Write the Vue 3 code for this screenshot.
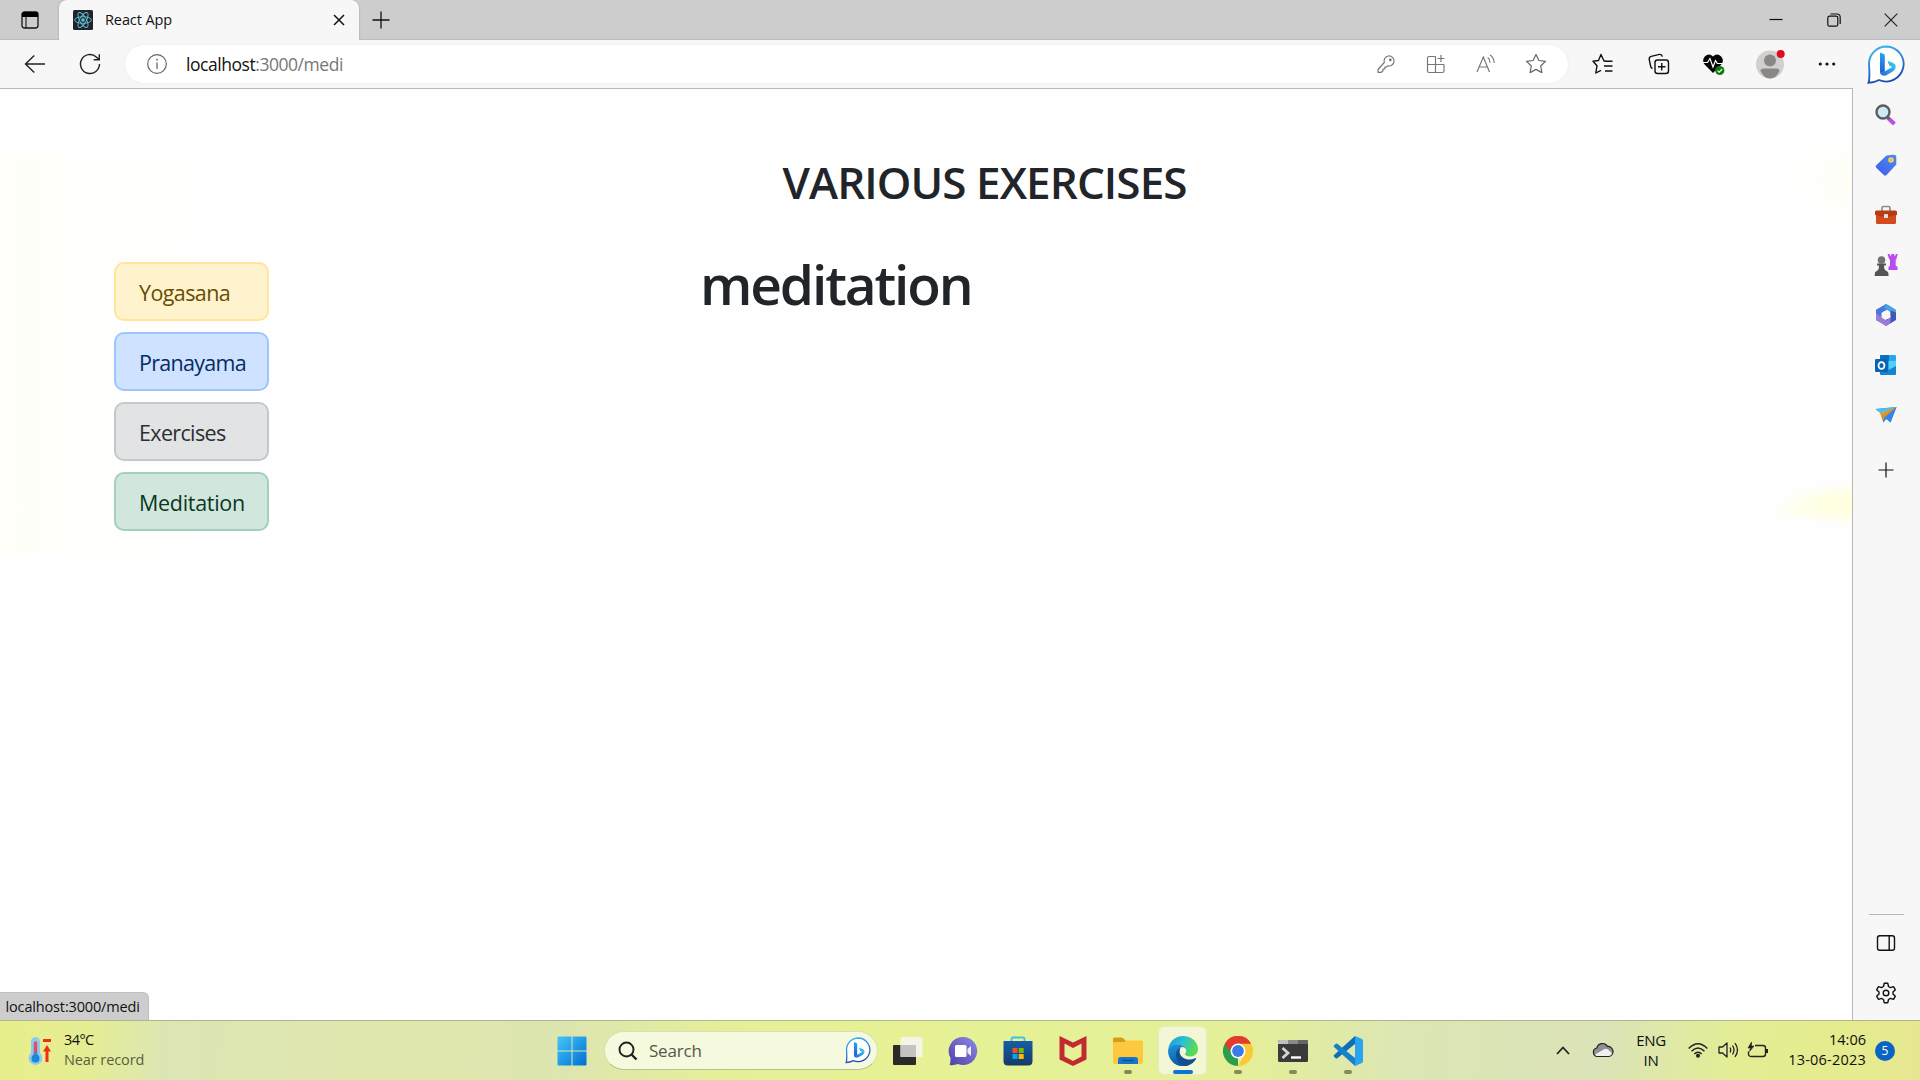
<script setup>
const links = [
  { label: 'Yogasana', tone: 'warning' },
  { label: 'Pranayama', tone: 'primary' },
  { label: 'Exercises', tone: 'secondary' },
  { label: 'Meditation', tone: 'success' },
]
</script>

<template>
  <div class="screen">
    <svg class="defs" width="0" height="0">
      <defs>
        <linearGradient id="bingRing" x1="0" y1="0" x2="0.3" y2="1">
          <stop offset="0" stop-color="#35c1ee" /><stop offset="0.5" stop-color="#2f83dd" /><stop offset="1" stop-color="#1d4cb0" />
        </linearGradient>
        <linearGradient id="bingStem" x1="0" y1="0" x2="0" y2="1">
          <stop offset="0" stop-color="#2aa5ee" /><stop offset="1" stop-color="#2354d8" />
        </linearGradient>
        <linearGradient id="bingTail" x1="0" y1="1" x2="1" y2="0">
          <stop offset="0" stop-color="#2466e4" /><stop offset="1" stop-color="#3bd6ee" />
        </linearGradient>
        <symbol id="bing" viewBox="0 0 38 40">
          <path d="M19.500 1.500a17.500 17.500 0 1 1-7.500 33.500Q7 37.800 1.500 37.800Q3 34 2 19A17.500 17.500 0 0 1 19.500 1.500z" fill="#fff" stroke="url(#bingRing)" stroke-width="1.900" />
          <path d="M13 7.500l3.800 1.500q1 .5 1 1.600V27l-2.300 3.300Q13 29.500 13 26.500z" fill="url(#bingStem)" />
          <path d="M13.200 27.500q1.200 3.200 4 3.200 1.500 0 3-.9l6-3.600q2.500-1.600 2.500-4.200c0-2.500-1.500-3.700-3.500-4.500l-3.600-1.300q-1.200-.2-.8.9l1.500 3.500 3 1.400-7.800 4.600z" fill="url(#bingTail)" />
        </symbol>
      </defs>
    </svg>

    <header class="titlebar">
      <div class="workspaces">
        <svg width="20" height="20" viewBox="0 0 20 20"><rect x="2" y="2" width="16" height="16" rx="2.500" fill="none" stroke="#111" stroke-width="1.300" /><path d="M2 7V4a2 2 0 0 1 2-2h12a2 2 0 0 1 2 2v3z" fill="#000" /><path d="M6 7v11" stroke="#222" stroke-width="1.200" /></svg>
      </div>
      <div class="tab">
        <svg class="favicon" width="20" height="20" viewBox="0 0 20 20"><rect width="20" height="20" rx="1.500" fill="#20232a" /><g fill="none" stroke="#61c5dd" stroke-width=".9"><ellipse cx="10" cy="10" rx="8.400" ry="3.300" /><ellipse cx="10" cy="10" rx="8.400" ry="3.300" transform="rotate(60 10 10)" /><ellipse cx="10" cy="10" rx="8.400" ry="3.300" transform="rotate(120 10 10)" /></g><circle cx="10" cy="10" r="1.800" fill="#61c5dd" /></svg>
        <span class="tab-title">React App</span>
        <svg width="12" height="12" viewBox="0 0 12 12"><path d="M1 1l10 10M11 1L1 11" stroke="#111" stroke-width="1.500" /></svg>
      </div>
      <div class="newtab">
        <svg width="18" height="18" viewBox="0 0 18 18"><path d="M9 .5v17M.5 9h17" stroke="#111" stroke-width="1.300" /></svg>
      </div>
      <div class="window-buttons">
        <span><svg width="14" height="14" viewBox="0 0 14 14"><path d="M.5 6.500h13" stroke="#111" stroke-width="1.200" /></svg></span>
        <span><svg width="14" height="14" viewBox="0 0 14 14"><rect x=".8" y="3.200" width="10" height="10" rx="1.800" fill="none" stroke="#111" stroke-width="1.200" /><path d="M3.500 1h6.500q3.200 0 3.200 3.200V11" fill="none" stroke="#111" stroke-width="1.200" /></svg></span>
        <span><svg width="14" height="14" viewBox="0 0 14 14"><path d="M.7.7l12.600 12.600M13.300.7L.7 13.300" stroke="#222" stroke-width="1.200" /></svg></span>
      </div>
    </header>

    <div class="browser">
      <div class="main">
        <div class="toolbar">
          <span class="tool nav"><svg width="22" height="20" viewBox="0 0 22 20"><path d="M21 10H1.500M10.300 1.500L1.500 10l8.800 8.500" fill="none" stroke="#222" stroke-width="1.400" /></svg></span>
          <span class="tool nav"><svg width="22" height="22" viewBox="0 0 22 22"><path d="M20.500 11a9.500 9.500 0 1 1-3.200-7.100L20 6.400M20.300 1.200v5.600h-5.600" fill="none" stroke="#222" stroke-width="1.400" /></svg></span>
          <div class="address">
            <svg class="info" width="22" height="22" viewBox="0 0 22 22"><circle cx="11" cy="11" r="9.300" fill="none" stroke="#666" stroke-width="1.200" /><path d="M11 9.500V16" stroke="#666" stroke-width="1.300" /><circle cx="11" cy="6.700" r=".9" fill="#666" /></svg>
            <span class="url">localhost<i>:3000/medi</i></span>
            <div class="address-tools">
              <span><svg width="20" height="20" viewBox="0 0 20 20" fill="none" stroke="#777" stroke-width="1.200"><path d="M8.300 8.500a5 5 0 1 1 3.500 3.300L10.500 13H8.800v2H7v1.700L5.300 18.300H2V15.500z" stroke-linejoin="round" /><circle cx="14.300" cy="5.900" r=".8" fill="#777" /></svg></span>
              <span><svg width="20" height="20" viewBox="0 0 20 20" fill="none" stroke="#777" stroke-width="1.200"><path d="M9.500 2.500H3a1.500 1.500 0 0 0-1.500 1.500v13A1.500 1.500 0 0 0 3 18.500h13.500A1.500 1.500 0 0 0 18 17v-6.500M1.500 10.500H18M9.500 2.500v16M15 1v7M11.500 4.500h7" /></svg></span>
              <span><svg width="20" height="20" viewBox="0 0 20 20" fill="none" stroke="#777" stroke-width="1.200"><path d="M1 18L7.300 3 13.500 18M3.200 13h8.100M11.700 3.500q2.300 1.600 2.300 5M14 1q4 2.500 4.200 8" /></svg></span>
              <span><svg width="22" height="22" viewBox="0 0 22 22" fill="none" stroke="#666" stroke-width="1.200" stroke-linejoin="round"><path d="M11 1.500l2.900 6 6.600.9-4.800 4.600 1.200 6.600-5.900-3.200-5.900 3.200L6.300 13 1.500 8.400l6.600-.9z" /></svg></span>
            </div>
          </div>
          <span class="tool wide first"><svg width="22" height="22" viewBox="0 0 22 22" fill="none" stroke="#111" stroke-width="1.400" stroke-linejoin="round"><path d="M13.500 8H12L9 1.500 6.500 7.500 1 8.300l4 4.500L3.800 20 9 17.300M13 8.200h7.500M12 13h8.500M13 18h7.500" /></svg></span>
          <span class="tool wide"><svg width="22" height="22" viewBox="0 0 22 22" fill="none" stroke="#111" stroke-width="1.400"><rect x="7" y="7" width="13.500" height="13.500" rx="2.500" /><path d="M4.500 15.500Q3 15 2.700 13.500L1.200 6.300Q1 4 3.200 3.400l8.300-2q2.300-.3 2.900 2.200M13.750 10v7.500M10 13.750h7.500" /></svg></span>
          <span class="tool wide"><svg width="24" height="24" viewBox="0 0 24 24"><path d="M11 21L2.800 12.700a6 6 0 0 1 0-8.300q4.200-4 8.200 0 4-4 8.200 0a6 6 0 0 1 0 8.300z" fill="#050505" /><path d="M1 10.500h4.500L8 6.500l3 8.500 2.500-6.500 1.800 3H21" fill="none" stroke="#fff" stroke-width="1.200" /><circle cx="17.800" cy="18.500" r="4.600" fill="#107c10" /><path d="M15.600 18.600l1.600 1.600 2.900-3" fill="none" stroke="#fff" stroke-width="1.200" /></svg></span>
          <span class="tool wide"><svg width="32" height="32" viewBox="0 0 32 32"><circle cx="16" cy="16.500" r="14" fill="#d2d0ce" /><circle cx="16" cy="12.500" r="6" fill="#8a8886" /><path d="M6.500 23q0-2.500 3-2.500h13q3 0 3 2.500-3.500 7.500-9.500 7.500T6.500 23z" fill="#8a8886" /><circle cx="26.700" cy="6" r="4" fill="#e00b1c" /></svg></span>
          <span class="tool wide more"><svg width="18" height="6" viewBox="0 0 18 6" fill="#111"><circle cx="2.300" cy="3" r="1.600" /><circle cx="9" cy="3" r="1.600" /><circle cx="15.700" cy="3" r="1.600" /></svg></span>
        </div>

        <main class="page">
          <h1 class="title">VARIOUS EXERCISES</h1>
          <div class="columns">
            <nav class="links">
              <a v-for="link in links" :key="link.label" :class="['link', link.tone]">{{ link.label }}</a>
            </nav>
            <h2 class="subtitle">meditation</h2>
          </div>
          <div class="status">localhost:3000/medi</div>
        </main>
      </div>

      <aside class="sidebar">
        <div class="bing-cell"><svg width="38" height="40"><use href="#bing" /></svg></div>
        <div class="cell"><svg width="22" height="22" viewBox="0 0 22 22"><path d="M13 14l6.500 6" stroke="#c04be8" stroke-width="4" /><path d="M12 12.500l2.500 2.500" stroke="#666" stroke-width="2.500" /><circle cx="8" cy="8" r="6.500" fill="#cfe8f6" stroke="#5d5d5d" stroke-width="2.400" /></svg></div>
        <div class="cell"><svg width="22" height="22" viewBox="0 0 22 22"><defs><linearGradient id="tag" x1="0" y1="1" x2="1" y2="0"><stop stop-color="#3d5cf0" /><stop offset="1" stop-color="#4e8bea" /></linearGradient></defs><path d="M11.500 1.500L18.500.7Q21.300.5 21.300 3v7.500L11.500 21q-1.500 1-2.700 0L1.500 14q-1.600-1.600 0-3z" fill="url(#tag)" /><circle cx="16" cy="6" r="2" fill="#c9bb85" stroke="#ffd45b" stroke-width="1.600" /></svg></div>
        <div class="cell"><svg width="24" height="20" viewBox="0 0 24 20"><path d="M8 6V3q0-1.500 1.500-1.500h5Q16 1.500 16 3v3" fill="none" stroke="#8c8c8c" stroke-width="1.700" /><rect x="2" y="9" width="20" height="10" rx="1.500" fill="#d34a1b" /><path d="M1 7q0-1.500 1.500-1.500h19Q23 5.500 23 7v3l-7 1.500H8L1 10z" fill="#b83a10" /><rect x="10" y="9" width="4" height="4" rx=".6" fill="#ddd" /></svg></div>
        <div class="cell"><svg width="24" height="24" viewBox="0 0 24 24"><path d="M13.500 1h2.200v1.500h1.600V1h2.800v1.500h1.600V1h2l-1.400 5.500h-.6v6l1.800 1.500V17h-9v-3l1.500-1.500v-6h-.8z" fill="#b94df2" /><circle cx="7.500" cy="7" r="3.800" fill="#727272" /><path d="M3 10.500h9v2H10q0 4.500 2.500 5.500 2 .7 2 3v2H.7v-2q0-2.300 2-3Q5 17 5 12.500H3z" fill="#555" /></svg></div>
        <div class="cell"><svg width="22" height="24" viewBox="0 0 22 24"><path d="M11 1L1 6.800v7l5.500 3V10L15 5V3.300z" fill="#4a77d9" /><path d="M11 1l4.500 2.300L21 6.800v7L15.500 12V9L9 5z" fill="#46a5e0" /><path d="M11 23l10-6V9.500l-5.500-2v7L6.500 19z" fill="#3d57bd" /><path d="M1 10v7.200L11 23l4-2.500 1-6-4.500 3L7 14.800z" fill="#9a7bd6" /><circle cx="11" cy="12" r="4" fill="#f6f6f6" /></svg></div>
        <div class="cell"><svg width="22" height="22" viewBox="0 0 22 22"><rect x="5" y="1" width="16" height="19" rx="1.300" fill="#28a8ea" /><path d="M5 2q0-1 1-1h8v6H5z" fill="#0d70bd" /><path d="M14 7h7v5l-7 4z" fill="#50d0f8" /><path d="M5 11l9 5 7-4v8q0 1-1 1H6q-1 0-1-1z" fill="#1685d1" /><rect x="0" y="5" width="13" height="13" rx="1.300" fill="#0864b5" /><ellipse cx="6.500" cy="11.500" rx="3" ry="3.400" fill="none" stroke="#fff" stroke-width="1.800" /></svg></div>
        <div class="cell"><svg width="22" height="18" viewBox="0 0 22 18"><path d="M.5 3L21.500 1 15.500 16.500 11.500 13 8 16.800V9z" fill="#368ce3" /><path d="M.5 3l21-2L8 9z" fill="#4fbce9" /><path d="M4.500 7.500L21.500 1 8 12z" fill="#e6a32d" /><path d="M6 9L21.500 1 9.500 11.500 7.500 15z" fill="#d8922a" /><path d="M21.500 1L15.500 16.500 10 11.500z" fill="#3684ea" /></svg></div>
        <div class="cell plus"><svg width="16" height="16" viewBox="0 0 16 16"><path d="M8 .5v15M.5 8h15" stroke="#111" stroke-width="1.200" /></svg></div>
        <div class="sidebar-bottom">
          <hr />
          <div class="cell"><svg width="20" height="18" viewBox="0 0 20 18" fill="none" stroke="#111"><rect x="1.500" y="1.800" width="17" height="14.400" rx="2.200" stroke-width="1.400" /><path d="M13.200 2v14" stroke-width="1.400" /></svg></div>
          <div class="cell"><svg width="24" height="24" viewBox="0 0 24 24" fill="none" stroke="#111" stroke-width="1.400" stroke-linejoin="round"><path d="M10.200 2.300h3.600l.7 3.200 1.900 1.100 3.100-1 1.900 3.200-2.400 2.200v2l2.400 2.200-1.900 3.200-3.100-1-1.900 1.100-.7 3.200h-3.600l-.7-3.200-1.900-1.100-3.100 1-1.900-3.200L5 13v-2L2.600 8.800l1.900-3.200 3.100 1 1.900-1.100z" /><circle cx="12" cy="12" r="2.800" /></svg></div>
        </div>
      </aside>
    </div>

    <footer class="taskbar">
      <div class="weather">
        <svg width="24" height="30" viewBox="0 0 24 30"><path d="M3 5.500a4.500 4.500 0 0 1 9 0V17a6.800 6.800 0 1 1-9 0z" fill="#8fc9ee" /><path d="M7.500 7v15" stroke="#d9506c" stroke-width="3.500" stroke-linecap="round" /><path d="M7.500 16v5" stroke="#5f7bc7" stroke-width="3.500" /><circle cx="7.500" cy="22.500" r="4" fill="#1688d8" /><path d="M15 4.500h8" stroke="#f22f14" stroke-width="3" /><path d="M19 26V13" stroke="#f22f14" stroke-width="3" /><path d="M15 15.500L19 9l4 6.500z" fill="#f22f14" /></svg>
        <div class="weather-text"><span class="temp">34°C</span><span class="note">Near record</span></div>
      </div>

      <div class="apps">
        <span class="start"><svg width="30" height="30" viewBox="0 0 30 30"><defs><linearGradient id="win" x1="0" y1="0" x2="1" y2="1"><stop stop-color="#43c7f8" /><stop offset="1" stop-color="#0070d3" /></linearGradient></defs><path d="M1.500.500h13v14h-14v-13q0-1 1-1zM15.500.500h13q1 0 1 1v13h-14zM.5 15.500h14v14h-13q-1 0-1-1zM15.500 15.500h14v13q0 1-1 1h-13z" fill="url(#win)" /></svg></span>
        <div class="search">
          <svg class="lens" width="20" height="20" viewBox="0 0 20 20" fill="none" stroke="#222" stroke-width="1.900"><circle cx="8.500" cy="8.500" r="7" /><path d="M13.500 13.500l5 5" stroke-width="2.400" /></svg>
          <span class="search-label">Search</span>
          <svg width="26" height="27"><use href="#bing" /></svg>
        </div>
        <span class="app"><svg width="30" height="30" viewBox="0 0 30 30"><rect x="0" y="9" width="23" height="20" rx="1" fill="#2c2a29" /><rect x="7.500" y="1" width="22" height="20" rx="1" fill="#f6f6f2" fill-opacity=".85" /><rect x="7.500" y="9" width="15.500" height="12" fill="#c5c4c1" /></svg></span>
        <span class="app"><svg width="30" height="30" viewBox="0 0 30 30"><defs><linearGradient id="chat" x1="1" y1="0" x2="0" y2="1"><stop stop-color="#8e8be5" /><stop offset="1" stop-color="#4e40a8" /></linearGradient></defs><path d="M15 1a14 14 0 1 1-5 27q-4 1.500-8.300 1Q2.500 26 2.600 22A14 14 0 0 1 15 1z" fill="url(#chat)" /><rect x="7" y="9" width="11.500" height="12" rx="1.500" fill="#fff" /><path d="M19.500 13l3.500-3v10l-3.500-3z" fill="#eee" /></svg></span>
        <span class="app"><svg width="30" height="30" viewBox="0 0 30 30"><defs><linearGradient id="store" x1="0" y1="0" x2="0" y2="1"><stop stop-color="#155fa6" /><stop offset="1" stop-color="#173a67" /></linearGradient></defs><path d="M8.500 6V3q0-1.500 1.500-1.500h10q1.500 0 1.500 1.500v3" fill="none" stroke="#38c1ef" stroke-width="1.800" /><path d="M.5 5h29v20q0 4.500-4.500 4.500H5Q.5 29.500.5 25z" fill="url(#store)" /><path d="M9.500 12h5v5h-5z" fill="#f25022" /><path d="M15.700 12h5v5h-5z" fill="#7fba00" /><path d="M9.500 18h5v5h-5z" fill="#00a4ef" /><path d="M15.700 18h5v5h-5z" fill="#ffb900" /></svg></span>
        <span class="app"><svg width="28" height="32" viewBox="0 0 28 32"><path d="M.5 1L14 7.500 27.500 1v23.500L14 31 .5 24.500zM5.500 8.500v13L14 26l8.500-4.500v-13L14 13z" fill="#c12a30" fill-rule="evenodd" /></svg></span>
        <span class="app running"><svg width="30" height="28" viewBox="0 0 30 28"><path d="M0 2q0-1.500 1.500-1.500h7q1 0 1.700.7L12.500 3.500V8H0z" fill="#d99b12" /><path d="M0 6q0-1 1-1h10l2-1.500h15.500Q30 3.500 30 5v20.500q0 1.500-1.500 1.500h-27Q0 27 0 25.500z" fill="#fdc83d" /><path d="M5 27v-4.500Q5 20 7.500 20h15q2.500 0 2.500 2.500V27z" fill="#1a76c9" /><path d="M9.500 23.500h11" stroke="#0c4f91" stroke-width="1.500" /></svg></span>
        <span class="app running active"><svg width="30" height="30" viewBox="0 0 30 30"><defs><linearGradient id="edgeTop" x1="0" y1="0" x2="1" y2=".4"><stop stop-color="#1695d8" /><stop offset=".5" stop-color="#2bbfd4" /><stop offset="1" stop-color="#58db55" /></linearGradient><linearGradient id="edgeBody" x1="0" y1="0" x2=".4" y2="1"><stop stop-color="#1c98de" /><stop offset="1" stop-color="#0c59a4" /></linearGradient></defs><path d="M.2 13.500C1.200 5.500 7.300 0 15 0c8.200 0 15 5.800 15 13 0 4.700-3.600 7.500-7.700 7.500-3.500 0-5.300-1.200-5.300-2.200 0-.8 1.200-1.300 1.200-3.600 0-3.100-3-6-7.500-6C5.500 8.700 1.500 10.800.2 13.500z" fill="url(#edgeTop)" /><path d="M.2 13.500C1.500 10.500 5 8.500 9.500 8.500c5 0 8.700 2.700 8.700 6.200 0-2.200-2-3.800-4-3.800-2.500 0-4.700 3-4.700 6.300 0 6 4.600 10.800 11 12.100A15 15 0 0 1 .2 13.500z" fill="url(#edgeBody)" /><path d="M13 11.200c-3 1.200-5 3.800-5 7.600 0 5.700 4.500 11 11 11 4-1 7.200-3.500 9-6.800.4-.7-.1-1.200-.9-.8C20.500 25.500 13 22.500 11.800 17c-.4-2.300 0-4.200 1.200-5.800z" fill="#124d8f" /></svg></span>
        <span class="app running"><svg width="30" height="30" viewBox="0 0 30 30"><path d="M15 15L2 7.500a15 15 0 0 1 26 0z" fill="#e33b2e" /><path d="M15 15v15A15 15 0 0 1 2 7.500z" fill="#2c9e4b" /><path d="M15 7.500h13A15 15 0 0 1 15 30l6.500-11.200z" fill="#fcc934" /><path d="M2 7.500l6.500 11.300L15 15z" fill="#2c9e4b" /><path d="M2 7.500A15 15 0 0 1 28 7.500H15A7.500 7.500 0 0 0 8 12.500L6.500 15z" fill="#e33b2e" /><circle cx="15" cy="15" r="7.500" fill="#fff" /><circle cx="15" cy="15" r="5.900" fill="#3a7bea" /></svg></span>
        <span class="app running"><svg width="30" height="24" viewBox="0 0 30 24"><rect y="1" width="30" height="22" rx="1.500" fill="#3a3a3a" /><path d="M0 5V2.500Q0 1 1.500 1h8.500v4z" fill="#c0c0bd" /><path d="M10 1h10v4H10z" fill="#8a8a88" /><path d="M20 1h8.500Q30 1 30 2.500V5H20z" fill="#656565" /><path d="M4.500 9l5.500 5-5.500 5" fill="none" stroke="#d4d4d4" stroke-width="2.800" /><path d="M13 18.500h10" stroke="#fff" stroke-width="2.400" /></svg></span>
        <span class="app running"><svg width="30" height="30" viewBox="0 0 30 30"><path d="M22 0L1 19q-.8.8 0 1.600l1.700 1.600q.8.600 1.600 0L22 8z" fill="#0d6fb8" /><path d="M22 30L1 11q-.8-.8 0-1.600l1.700-1.600q.8-.6 1.600 0L22 22z" fill="#1682cc" /><path d="M22 0l7 3q1 .5 1 1.700v20.600q0 1.200-1 1.700l-7 3z" fill="#2ba3ee" /></svg></span>
      </div>

      <div class="tray">
        <span class="tray-icon chevron"><svg width="14" height="9" viewBox="0 0 14 9"><path d="M1 8l6-6.500L13 8" fill="none" stroke="#222" stroke-width="1.800" /></svg></span>
        <span class="tray-icon cloud"><svg width="22" height="16" viewBox="0 0 22 16"><path d="M5.500 14.500a4.300 4.300 0 0 1-.7-8.500 5.800 5.800 0 0 1 10.700-1.500 5 5 0 0 1 1 10z" fill="#8f9092" stroke="#222" stroke-width="1.200" /><path d="M3 12.500L12.500 7q2-.8 3.500.5l4 3.500q-.5 3-3.500 3h-11Q3.500 14 3 12.500z" fill="#efefee" /></svg></span>
        <div class="lang"><span>ENG</span><span>IN</span></div>
        <span class="tray-icon wifi"><svg width="20" height="16" viewBox="0 0 20 16" fill="none" stroke="#222" stroke-width="1.400"><path d="M.7 6.500q9.300-9.500 18.600 0M3.500 9.300q6.500-6.600 13 0M6.300 12q3.700-3.700 7.400 0" /><circle cx="10" cy="13.800" r="1.300" fill="#222" /></svg></span>
        <span class="tray-icon volume"><svg width="21" height="18" viewBox="0 0 21 18" fill="none" stroke="#222" stroke-width="1.300" stroke-linejoin="round"><path d="M1 6h3.500L9 2v14l-4.500-4H1zM12 6.500q1.500 2.500 0 5M14.500 4.500q3 4.500 0 9M17 2.200q5 6.800 0 13.600" /></svg></span>
        <span class="tray-icon battery"><svg width="22" height="18" viewBox="0 0 22 18" fill="none" stroke="#222" stroke-width="1.400"><path d="M8 4.500h8q2.500 0 2.500 2.500v6q0 2.500-2.500 2.500H4Q1.500 15.500 1.500 13v-2.500" /><path d="M20 8v4" stroke-width="2" /><path d="M4.500 1L1 7h2.500L2.500 10.500 7 5H4.500z" fill="#222" stroke-width=".6" /></svg></span>
        <div class="clock"><span>14:06</span><span class="date">13-06-2023</span></div>
        <span class="badge">5</span>
      </div>
    </footer>
  </div>
</template>

<style>
html, body { margin: 0; background: #fff; }
</style>

<style scoped>
* { box-sizing: border-box; }
svg { display: block; flex: none; }
.screen { width: 1920px; height: 1080px; display: flex; flex-direction: column; overflow: hidden; font-family: "Open Sans", "Noto Sans", sans-serif; color: #111; white-space: nowrap; }
.defs { position: absolute; }

.titlebar { height: 40px; flex: none; display: flex; align-items: stretch; background: #cdcdcd; border-bottom: 1px solid #bcbcbc; }
.workspaces { width: 59px; display: flex; align-items: center; justify-content: center; }
.tab { width: 300px; height: 40px; display: flex; align-items: center; padding: 0 14px; background: #f7f7f7; border-radius: 8px 8px 0 0; box-shadow: 0 0 2px #999; clip-path: inset(0 -3px 0 -3px); }
.tab-title { flex: 1; margin-left: 12px; font-size: 14.500px; letter-spacing: -.1px; line-height: 20px; }
.newtab { width: 44px; display: flex; align-items: center; justify-content: center; }
.window-buttons { margin-left: auto; display: flex; }
.window-buttons span { width: 57.500px; display: flex; align-items: center; justify-content: center; }

.browser { flex: 1; display: flex; min-height: 0; background: #f7f7f7; }
.main { flex: 1; display: flex; flex-direction: column; min-width: 0; }
.toolbar { height: 48px; display: flex; align-items: center; padding-left: 8px; }
.tool { display: flex; align-items: center; justify-content: center; height: 40px; }
.nav { width: 55px; }
.wide { width: 55.500px; }
.more { padding-left: 4px; }
.first { margin-left: 8px; }
.address { width: 1443px; height: 38px; margin-left: 7px; display: flex; align-items: center; background: #fff; border-radius: 19px; padding: 0 7px 0 21px; box-shadow: 0 0 3px #e8e8e8; }
.url { margin: -1px 0 0 18px; font-size: 17.500px; line-height: 24px; letter-spacing: -.45px; }
.url i { font-style: normal; color: #777; }
.address-tools { margin-left: auto; display: flex; }
.address-tools span { width: 50px; display: flex; align-items: center; justify-content: center; }

.page { flex: 1; display: flex; flex-direction: column; border-top: 1px solid #b9b9b9; border-right: 1px solid #b9b9b9; background:
  radial-gradient(ellipse 68px 22px at 1851px 415px, #ffffd9 0%, #ffffe6 50%, rgba(255,255,240,0) 100%),
  radial-gradient(ellipse 55px 10px at 1822px 421px, #fffff0 50%, rgba(255,255,240,0) 100%),
  radial-gradient(ellipse 60px 50px at 1851px 90px, #fffff6 0%, rgba(255,255,250,0) 100%),
  linear-gradient(90deg, #fffff9 0, rgba(255,255,255,0) 210px) 0 66px / 400px 400px no-repeat, #fefefe; }
.title { margin: 62px 0 0 782.500px; font-size: 44px; line-height: 62px; font-weight: 600; letter-spacing: -.93px; color: #212529; }
.columns { display: flex; margin-top: 23px; padding-left: 114px; align-items: flex-start; }
.links { width: 155px; display: flex; flex-direction: column; gap: 11px; margin-top: 26px; }
.link { height: 59px; border: 2px solid; border-radius: 10px; padding: 0 0 0 23px; font-size: 21.500px; line-height: 57px; }
.warning { color: #664d03; background: #fff3cd; border-color: #ffe69c; letter-spacing: -.6px; }
.primary { color: #052c65; background: #cfe2ff; border-color: #9ec5fe; letter-spacing: -.7px; }
.secondary { color: #2b2f32; background: #e2e3e5; border-color: #c4c8cb; letter-spacing: -.65px; }
.success { color: #0a3622; background: #d1e7dd; border-color: #a3cfbb; letter-spacing: -.3px; }
.subtitle { margin: 12px 0 0 431px; font-size: 55px; line-height: 72px; font-weight: 600; letter-spacing: -2.150px; color: #212529; }
.status { margin-top: auto; width: 149px; height: 28px; background: #cdcdcd; border-top: 1px solid #bfbfbf; border-right: 1px solid #bfbfbf; border-radius: 0 6px 0 0; padding-left: 5.500px; font-size: 14.500px; line-height: 27px; letter-spacing: -.15px; }

.sidebar { width: 67px; padding-right: 1px; display: flex; flex-direction: column; align-items: center; }
.bing-cell { height: 50px; padding-top: 5px; }
.cell { height: 50px; display: flex; align-items: center; justify-content: center; }
.plus { margin-top: 5px; }
.sidebar-bottom { margin-top: auto; display: flex; flex-direction: column; align-items: center; padding-bottom: 2px; }
.sidebar-bottom hr { width: 35px; height: 1px; border: 0; margin: 0 0 3px; background: #b8b8b8; }

.taskbar { height: 60px; flex: none; display: flex; align-items: center; border-top: 1px solid #b3b58c; background: linear-gradient(95deg, #e7ef8a 0, #e5ed94 90px, #dce5b4 170px, #e0e6ac 400px, #dde5b0 560px, #e5ef99 720px, #e7f194 900px, #e5ef98 1240px, #dce6b4 1400px, #dbe3b8 1600px, #e4ed95 1730px, #e5ec8e 1840px, #e7e692 1920px); }
.weather { width: 544px; padding-left: 28px; display: flex; align-items: center; gap: 12px; }
.weather-text { display: flex; flex-direction: column; margin-top: -2px; font-size: 14.500px; line-height: 20px; }
.temp { letter-spacing: -.6px; }
.note { color: #5b5e40; letter-spacing: -.1px; }
.apps { display: flex; align-items: center; height: 60px; }
.start { width: 60px; padding-left: 12.500px; }
.search { width: 274px; height: 39px; display: flex; align-items: center; border-radius: 20px; background: #f5f9de; border: 1px solid #d9dfb0; border-bottom-color: #b9c08c; padding: 0 6px 0 13px; }
.search-label { flex: 1; margin-left: 11px; font-size: 17px; line-height: 24px; color: #55584a; letter-spacing: -.2px; }
.app { position: relative; width: 55px; height: 49px; display: flex; align-items: center; justify-content: center; }
.search + .app { margin-left: 2px; }
.active::before { content: ""; position: absolute; z-index: 0; inset: 0 3px; background: #f3f7d5; border: 1px solid #e6ecc0; border-radius: 6px; }
.app svg { position: relative; }
.running::after { content: ""; position: absolute; bottom: 1px; left: 23.500px; width: 8px; height: 4px; border-radius: 2px; background: #858a58; }
.active::after { left: 17.500px; width: 20px; background: #0b76d1; }
.tray { margin-left: auto; display: flex; align-items: center; padding-right: 25px; }
.tray-icon { display: flex; justify-content: center; margin-top: -1px; }
.chevron { width: 40px; }
.cloud { width: 40px; }
.lang { width: 56px; display: flex; flex-direction: column; align-items: center; margin-top: -2px; font-size: 15px; line-height: 20px; letter-spacing: -.3px; }
.wifi { width: 38px; }
.volume { width: 22px; margin-right: 4px; }
.battery { width: 30px; }
.clock { width: 93px; display: flex; flex-direction: column; align-items: flex-end; margin-top: -2px; font-size: 14.500px; line-height: 20px; }
.date { letter-spacing: .22px; }
.badge { width: 20px; height: 20px; margin-left: 9px; border-radius: 50%; background: #0a64c4; color: #fff; text-align: center; font-size: 12px; line-height: 20px; }
</style>
